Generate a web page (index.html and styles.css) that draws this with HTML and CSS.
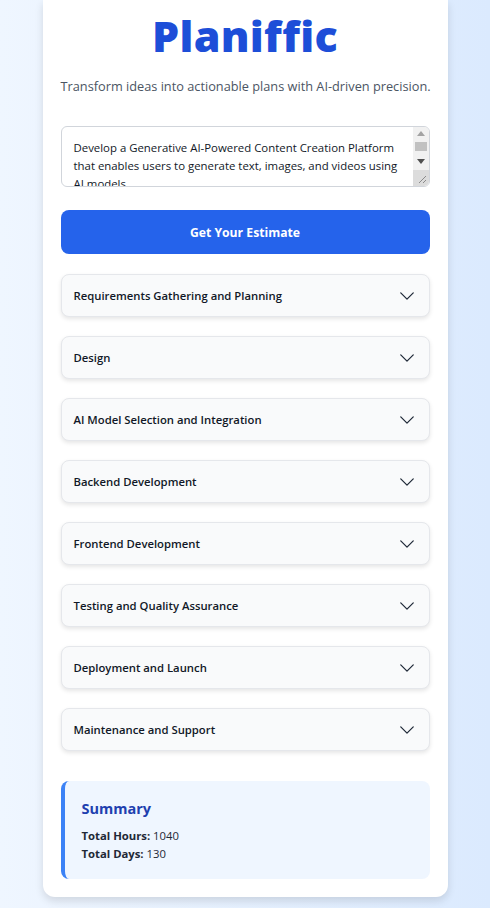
FILE: index.html
```html
<!DOCTYPE html>
<html lang="en">
<head>
<meta charset="utf-8">
<title>Planiffic</title>
<link rel="stylesheet" href="styles.css">
</head>
<body>
<main class="card">
  <h1 class="title">Planiffic</h1>
  <p class="subtitle">Transform ideas into actionable plans with AI-driven precision.</p>
  <div class="idea-wrap">
    <textarea class="idea" rows="3">Develop a Generative AI-Powered Content Creation Platform that enables users to generate text, images, and videos using AI models.</textarea>
    <div class="scrollbar" aria-hidden="true">
      <div class="sb-btn"><svg viewBox="0 0 8 5" class="sb-arrow"><path d="M4 0L8 5H0z" fill="#a3a3a3"/></svg></div>
      <div class="sb-track"><div class="sb-thumb"></div></div>
      <div class="sb-btn"><svg viewBox="0 0 8 5" class="sb-arrow"><path d="M0 0H8L4 5z" fill="#505050"/></svg></div>
      <div class="sb-corner"><svg viewBox="0 0 16 16" class="grip"><path d="M13 6L6 13M13 10L10 13" stroke="#8a8a8a" stroke-width="1" fill="none"/></svg></div>
    </div>
  </div>
  <button class="estimate">Get Your Estimate</button>
  <div class="phases">
    <div class="phase"><span>Requirements Gathering and Planning</span><svg class="chev" viewBox="0 0 24 24"><path d="M19.5 8.25l-7.5 7.5-7.5-7.5"/></svg></div>
    <div class="phase"><span>Design</span><svg class="chev" viewBox="0 0 24 24"><path d="M19.5 8.25l-7.5 7.5-7.5-7.5"/></svg></div>
    <div class="phase"><span>AI Model Selection and Integration</span><svg class="chev" viewBox="0 0 24 24"><path d="M19.5 8.25l-7.5 7.5-7.5-7.5"/></svg></div>
    <div class="phase"><span>Backend Development</span><svg class="chev" viewBox="0 0 24 24"><path d="M19.5 8.25l-7.5 7.5-7.5-7.5"/></svg></div>
    <div class="phase"><span>Frontend Development</span><svg class="chev" viewBox="0 0 24 24"><path d="M19.5 8.25l-7.5 7.5-7.5-7.5"/></svg></div>
    <div class="phase"><span>Testing and Quality Assurance</span><svg class="chev" viewBox="0 0 24 24"><path d="M19.5 8.25l-7.5 7.5-7.5-7.5"/></svg></div>
    <div class="phase"><span>Deployment and Launch</span><svg class="chev" viewBox="0 0 24 24"><path d="M19.5 8.25l-7.5 7.5-7.5-7.5"/></svg></div>
    <div class="phase"><span>Maintenance and Support</span><svg class="chev" viewBox="0 0 24 24"><path d="M19.5 8.25l-7.5 7.5-7.5-7.5"/></svg></div>
  </div>
  <section class="summary">
    <h2>Summary</h2>
    <p><b>Total Hours:</b> 1040</p>
    <p><b>Total Days:</b> 130</p>
  </section>
</main>
</body>
</html>
```
FILE: styles.css
```css
html, body {
  margin: 0;
  padding: 0;
}
body {
  min-height: 908px;
  background: linear-gradient(to right, #eff6ff, #dbeafe);
  font-family: "Open Sans", "Noto Sans", sans-serif;
  color: #1f2937;
}
.card {
  width: 369px;
  margin: 0 auto;
  padding: 11px 18px 18px;
  background: #fff;
  border-radius: 0 0 12px 12px;
  box-shadow: 0 4px 8px rgba(0,0,0,0.12);
}
.title {
  margin: 0;
  text-align: center;
  font-size: 43px;
  line-height: 50px;
  font-weight: 800;
  color: #1d4ed8;
  letter-spacing: 0.3px;
}
.subtitle {
  margin: 15px 0 0;
  text-align: center;
  font-size: 12.75px;
  line-height: 20px;
  color: #4b5563;
  white-space: nowrap;
}
.idea-wrap {
  position: relative;
  margin: 30px 0 0;
}
.idea {
  display: block;
  box-sizing: border-box;
  width: 369px;
  height: 61px;
  margin: 0;
  padding: 12px 29px 12px 12px;
  border: 1px solid #d1d5db;
  border-radius: 6px;
  font-family: "Open Sans", "Noto Sans", sans-serif;
  font-size: 11.4px;
  line-height: 18px;
  color: #111827;
  resize: none;
  overflow: hidden;
}
.scrollbar {
  position: absolute;
  top: 1px;
  right: 1px;
  bottom: 1px;
  width: 16px;
  display: flex;
  flex-direction: column;
  background: #f1f1f1;
  border-radius: 0 5px 5px 0;
  overflow: hidden;
}
.sb-btn {
  height: 13px;
  display: flex;
  align-items: center;
  justify-content: center;
}
.sb-arrow {
  width: 8px;
  height: 5px;
}
.sb-track {
  flex: 1;
  padding: 2px 2px 0;
}
.sb-thumb {
  height: 9px;
  background: #c1c1c1;
}
.sb-corner {
  height: 16px;
  margin-top: 2px;
  background: #dcdcdc;
}
.grip {
  display: block;
  width: 16px;
  height: 16px;
}
.estimate {
  display: block;
  width: 369px;
  height: 44px;
  margin: 23px 0 0;
  border: 0;
  border-radius: 8px;
  background: #2563eb;
  color: #fff;
  font-family: "Open Sans", "Noto Sans", sans-serif;
  font-size: 12.2px;
  font-weight: 700;
}
.phases {
  display: flex;
  flex-direction: column;
  gap: 19px;
  margin-top: 20px;
}
.phase {
  display: flex;
  align-items: center;
  justify-content: space-between;
  height: 43px;
  box-sizing: border-box;
  padding: 0 12px 0 12px;
  background: #f9fafb;
  border: 1px solid #e5e7eb;
  border-radius: 8px;
  box-shadow: 0 2px 4px rgba(0,0,0,0.1);
  font-size: 11.3px;
  font-weight: 600;
  color: #111827;
}
.chev {
  width: 20px;
  height: 20px;
  fill: none;
  stroke: #1f2937;
  stroke-width: 1.5;
  stroke-linecap: round;
  stroke-linejoin: round;
}
.summary {
  margin-top: 30px;
  padding: 16.5px 20px 16.5px 17px;
  background: #eff6ff;
  border-left: 4px solid #3b82f6;
  border-radius: 8px;
}
.summary h2 {
  margin: 0 0 7px;
  font-size: 14.5px;
  line-height: 22px;
  font-weight: 700;
  color: #1e40af;
}
.summary p {
  margin: 0;
  font-size: 11.3px;
  line-height: 18px;
  color: #1f2937;
}
.summary b {
  font-weight: 700;
}
```
